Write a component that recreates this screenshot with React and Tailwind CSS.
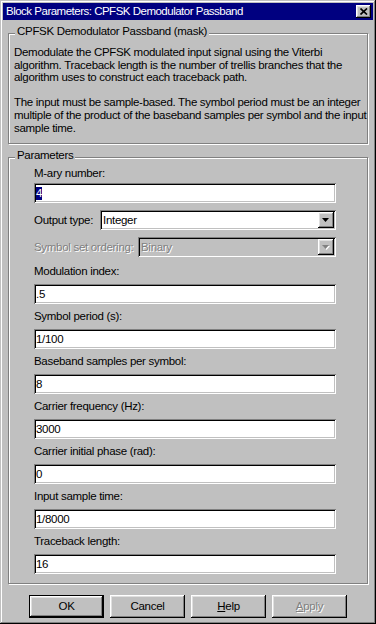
import React from 'react';

const raised = 'shadow-[inset_-1px_-1px_#000,inset_1px_1px_#fff,inset_-2px_-2px_#808080,inset_2px_2px_#dfdfdf]';
const sunken = 'shadow-[inset_1px_1px_#808080,inset_-1px_-1px_#fff,inset_2px_2px_#000,inset_-2px_-2px_#c0c0c0]';

function Group({ title, className, children }) {
  return (
    <div className={`relative border border-[#808080] shadow-[1px_1px_0_#fff,inset_1px_1px_0_#fff] ${className}`}>
      <span className="absolute left-[6px] top-[-10px] bg-[#c0c0c0] px-[2px] leading-[14px]">{title}</span>
      {children}
    </div>
  );
}

function Arrow({ disabled }) {
  return (
    <svg width="8" height="5" viewBox="0 0 8 5">
      {disabled && <polygon points="1,1 8,1 4.5,5" fill="#fff" />}
      <polygon points="0,0 7,0 3.5,4" fill={disabled ? '#808080' : '#000'} />
    </svg>
  );
}

function Select({ value, width, disabled }) {
  return (
    <div className={`flex h-[20px] items-center ${sunken} ${width} ${disabled ? 'bg-[#c0c0c0]' : 'bg-white'}`}>
      <span className={`flex-1 pl-[3px] ${disabled ? 'text-[#808080] [text-shadow:1px_1px_0_#fff]' : ''}`}>{value}</span>
      <div className={`mr-[2px] flex h-[16px] w-[16px] items-center justify-center bg-[#c0c0c0] ${raised}`}>
        <Arrow disabled={disabled} />
      </div>
    </div>
  );
}

function TextBox({ value, selected }) {
  return (
    <div className={`flex h-[20px] items-center bg-white pl-[2px] ${sunken}`}>
      {selected ? <span className="bg-[#000080] leading-[13px] text-white">{value}</span> : <span>{value}</span>}
    </div>
  );
}

const fields = [
  ['Symbol period (s):', '1/100'],
  ['Baseband samples per symbol:', '8'],
  ['Carrier frequency (Hz):', '3000'],
  ['Carrier initial phase (rad):', '0'],
  ['Input sample time:', '1/8000'],
  ['Traceback length:', '16'],
];

function Button({ children, isDefault }) {
  return (
    <div className={`flex h-[23px] w-[75px] items-center justify-center bg-[#c0c0c0] ${isDefault ? 'border border-black' : ''} ${raised}`}>
      {children}
    </div>
  );
}

export default function App() {
  return (
    <div className="h-[624px] w-[376px] bg-[#c0c0c0] p-[3px] font-['Liberation_Sans',Arial,sans-serif] text-[11.5px] tracking-[-0.3px] text-black shadow-[inset_-1px_-1px_#000,inset_1px_1px_#c0c0c0,inset_-2px_-2px_#808080,inset_2px_2px_#fff]">
      {/* title bar */}
      <div className="flex h-[17px] items-center justify-between bg-[#000080] pl-[3px] pr-[2px]">
        <span className="text-[11.5px] tracking-[-0.5px] text-white">Block Parameters: CPFSK Demodulator Passband</span>
        <div className={`flex h-[13px] w-[15px] items-center justify-center bg-[#c0c0c0] ${raised}`}>
          <svg width="8" height="7" viewBox="0 0 8 7">
            <path d="M0.5 0.5 L7 6.5 M7 0.5 L0.5 6.5" stroke="#000" strokeWidth="1.7" />
          </svg>
        </div>
      </div>

      <div className="mx-[5px]">
        <Group title="CPFSK Demodulator Passband (mask)" className="mt-[13px] pb-[9px] pl-[5px] pt-[12px]">
          <p className="whitespace-nowrap leading-[12.6px]">
            Demodulate the CPFSK modulated input signal using the Viterbi<br />
            algorithm. Traceback length is the number of trellis branches that the<br />
            algorithm uses to construct each traceback path.
          </p>
          <p className="mt-[12.6px] whitespace-nowrap leading-[12.6px]">
            The input must be sample-based. The symbol period must be an integer<br />
            multiple of the product of the baseband samples per symbol and the input<br />
            sample time.
          </p>
        </Group>

        <Group title="Parameters" className="mt-[13px] pb-[9px] pl-[25px] pt-[7px]">
          <div className="w-[302px]">
            <div className="h-[16px] leading-[16px]">M-ary number:</div>
            <div className="mt-[2px]"><TextBox value="4" selected /></div>

            <div className="mt-[7px] flex items-center">
              <span className="w-[66px]">Output type:</span>
              <Select value="Integer" width="w-[236px]" />
            </div>
            <div className="mt-[7px] flex items-center">
              <span className="w-[104px] text-[#808080] [text-shadow:1px_1px_0_#fff]">Symbol set ordering:</span>
              <Select value="Binary" width="w-[198px]" disabled />
            </div>

            <div className="mt-[6px] h-[16px] leading-[16px]">Modulation index:</div>
            <div className="mt-[5px]"><TextBox value=".5" /></div>

            {fields.map(([label, value]) => (
              <div key={label} className="mt-[4px]">
                <div className="h-[16px] leading-[16px]">{label}</div>
                <div className="mt-[5px]"><TextBox value={value} /></div>
              </div>
            ))}
          </div>
        </Group>
      </div>

      <div className="ml-[26px] mt-[11px] flex gap-[6px]">
        <Button isDefault>OK</Button>
        <Button>Cancel</Button>
        <Button><span><span className="underline">H</span>elp</span></Button>
        <Button><span className="text-[#808080] [text-shadow:1px_1px_0_#fff]"><span className="underline">A</span>pply</span></Button>
      </div>
    </div>
  );
}
